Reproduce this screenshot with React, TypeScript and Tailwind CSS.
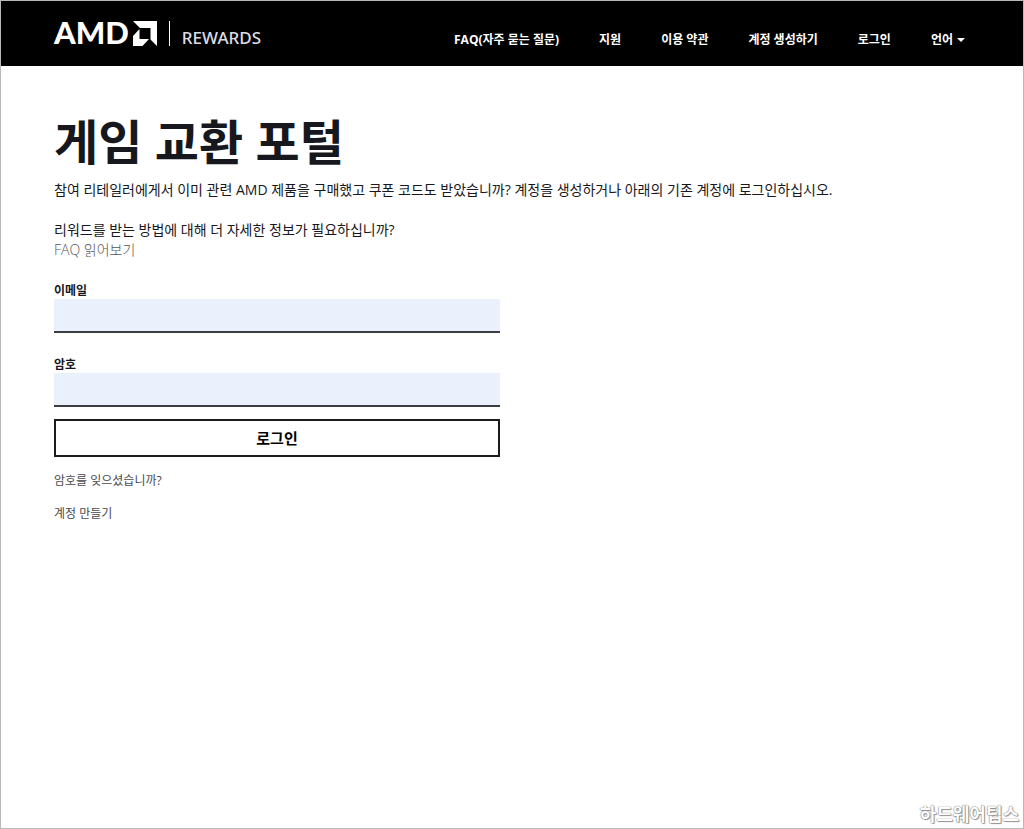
import React, { useState } from 'react';

const navLinks = [
  { label: 'FAQ(자주 묻는 질문)', href: '#faq' },
  { label: '지원', href: '#support' },
  { label: '이용 약관', href: '#terms' },
  { label: '계정 생성하기', href: '#register' },
  { label: '로그인', href: '#login' },
];

const Logo = () => (
  <a href="#home" className="flex items-center text-white">
    <span className="pb-1 font-['Lato',sans-serif] text-[31px] leading-8 font-black">AMD</span>
    <svg viewBox="0 0 24 25" className="ml-1 h-[25px] w-6" fill="currentColor" aria-hidden="true">
      <path d="M0 0H24V25L17.500 18.500V7H7Z" />
      <path d="M6.500 8V18H16L9.500 25H0V15Z" />
    </svg>
    <span className="ml-3 h-[25px] w-px bg-white" />
    <span className="ml-3 pt-2 font-['Noto_Sans',sans-serif] text-[17px] leading-6 font-medium text-[#dcdce4]">REWARDS</span>
  </a>
);

const Header = () => (
  <header className="flex h-[65px] items-center justify-between bg-black pr-[58px] pl-[53px]">
    <Logo />
    <nav className="flex items-center gap-10 pt-3 text-xs font-bold text-white">
      {navLinks.map((link) => (
        <a key={link.href} href={link.href}>
          {link.label}
        </a>
      ))}
      <button type="button" className="flex items-center gap-1">
        언어
        <span className="border-x-4 border-t-4 border-x-transparent border-t-white" />
      </button>
    </nav>
  </header>
);

const Field = ({ id, label, type }: { id: string; label: string; type: string }) => {
  const [value, setValue] = useState('');

  return (
    <div>
      <label htmlFor={id} className="block text-xs leading-4 font-bold">
        {label}
      </label>
      <input
        id={id}
        type={type}
        value={value}
        onChange={(e) => setValue(e.target.value)}
        className="block h-[34px] w-full border-b-2 border-[#3c3c42] bg-[#ebf1fc] px-2 text-sm outline-none"
      />
    </div>
  );
};

const LoginForm = () => (
  <form className="mt-[23px] w-full max-w-[446px]" onSubmit={(e) => e.preventDefault()}>
    <div className="space-y-6">
      <Field id="email" label="이메일" type="email" />
      <Field id="password" label="암호" type="password" />
    </div>
    <button type="submit" className="mt-3 h-[38px] w-full border-2 border-[#1c1c1c] bg-white text-[15px] font-bold text-black">
      로그인
    </button>
    <div className="mt-3.5 flex flex-col items-start gap-[13px] text-xs leading-5 text-[#4a4a4f]">
      <a href="#forgot">암호를 잊으셨습니까?</a>
      <a href="#register">계정 만들기</a>
    </div>
  </form>
);

const App = () => (
  <div className="relative min-h-screen border border-[#b8b8b8] bg-white font-['Open_Sans','Noto_Sans_CJK_KR',sans-serif] text-[#17181d]">
    <Header />
    <main className="px-[53px] pt-11">
      <h1 className="text-5xl leading-[64px] font-bold">게임 교환 포털</h1>
      <p className="mt-1.5 text-sm leading-5">
        참여 리테일러에게서 이미 관련 AMD 제품을 구매했고 쿠폰 코드도 받았습니까? 계정을 생성하거나 아래의 기존 계정에 로그인하십시오.
      </p>
      <p className="mt-5 text-sm leading-5">
        리워드를 받는 방법에 대해 더 자세한 정보가 필요하십니까?
        <br />
        <a href="#faq" className="font-light text-[#55555a]">
          FAQ 읽어보기
        </a>
      </p>
      <LoginForm />
    </main>
    <span className="absolute right-1 bottom-0 text-lg leading-7 font-bold text-white [text-shadow:0_0_1px_#777,0_0_1px_#777,1px_1px_1px_#999]">
      하드웨어팁스
    </span>
  </div>
);

export default App;
